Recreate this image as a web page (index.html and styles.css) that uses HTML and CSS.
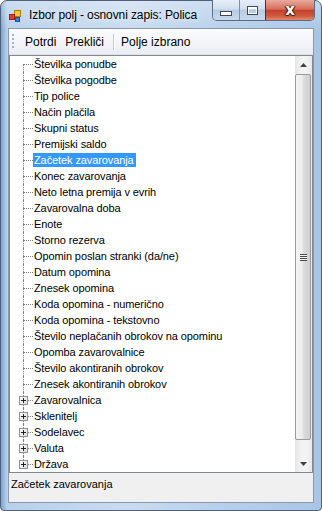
FILE: index.html
```html
<!DOCTYPE html>
<html>
<head>
<meta charset="utf-8">
<link rel="stylesheet" href="styles.css">
</head>
<body>
<div class="window">
  <div class="titlebar">
    <svg class="appicon" width="12" height="12" viewBox="0 0 12 12">
      <rect x="5.5" y="0.5" width="6" height="6" fill="#f6c63a" stroke="#b07a10"/>
      <rect x="0.5" y="4.5" width="5" height="5" fill="#e0412d" stroke="#9a2214"/>
      <rect x="6.5" y="7.5" width="4" height="4" fill="#3c7fd6" stroke="#1f4f96"/>
    </svg>
    <span class="title">Izbor polj - osnovni zapis: Polica</span>
    <div class="capbtns">
      <div class="capbtn min"><span class="min-glyph"></span></div>
      <div class="capbtn max"><span class="max-glyph"></span></div>
      <div class="capbtn close"><span class="close-glyph">x</span></div>
    </div>
  </div>
  <div class="client">
    <div class="toolbar">
      <span class="grip"></span>
      <span class="tbtn">Potrdi</span>
      <span class="tbtn">Prekliči</span>
      <span class="tsep"></span>
      <span class="tbtn">Polje izbrano</span>
    </div>
    <div class="tree">
      <div class="rows">
        <div class="row first"><span class="branch"></span><span class="label">Številka ponudbe</span></div>
        <div class="row"><span class="branch"></span><span class="label">Številka pogodbe</span></div>
        <div class="row"><span class="branch"></span><span class="label">Tip police</span></div>
        <div class="row"><span class="branch"></span><span class="label">Način plačila</span></div>
        <div class="row"><span class="branch"></span><span class="label">Skupni status</span></div>
        <div class="row"><span class="branch"></span><span class="label">Premijski saldo</span></div>
        <div class="row"><span class="branch"></span><span class="label selected">Začetek zavarovanja</span></div>
        <div class="row"><span class="branch"></span><span class="label">Konec zavarovanja</span></div>
        <div class="row"><span class="branch"></span><span class="label">Neto letna premija v evrih</span></div>
        <div class="row"><span class="branch"></span><span class="label">Zavarovalna doba</span></div>
        <div class="row"><span class="branch"></span><span class="label">Enote</span></div>
        <div class="row"><span class="branch"></span><span class="label">Storno rezerva</span></div>
        <div class="row"><span class="branch"></span><span class="label">Opomin poslan stranki (da/ne)</span></div>
        <div class="row"><span class="branch"></span><span class="label">Datum opomina</span></div>
        <div class="row"><span class="branch"></span><span class="label">Znesek opomina</span></div>
        <div class="row"><span class="branch"></span><span class="label">Koda opomina - numerično</span></div>
        <div class="row"><span class="branch"></span><span class="label">Koda opomina - tekstovno</span></div>
        <div class="row"><span class="branch"></span><span class="label">Število neplačanih obrokov na opominu</span></div>
        <div class="row"><span class="branch"></span><span class="label">Opomba zavarovalnice</span></div>
        <div class="row"><span class="branch"></span><span class="label">Število akontiranih obrokov</span></div>
        <div class="row"><span class="branch"></span><span class="label">Znesek akontiranih obrokov</span></div>
        <div class="row"><span class="branch plus"><span class="pbox"></span></span><span class="label">Zavarovalnica</span></div>
        <div class="row"><span class="branch plus"><span class="pbox"></span></span><span class="label">Sklenitelj</span></div>
        <div class="row"><span class="branch plus"><span class="pbox"></span></span><span class="label">Sodelavec</span></div>
        <div class="row"><span class="branch plus"><span class="pbox"></span></span><span class="label">Valuta</span></div>
        <div class="row last"><span class="branch plus"><span class="pbox"></span></span><span class="label">Država</span></div>
      </div>
      <div class="vscroll">
        <div class="sbtn">
          <svg width="7" height="4" viewBox="0 0 7 4"><path d="M0 4 L3.5 0 L7 4 Z" fill="#404040"/></svg>
        </div>
        <div class="track">
          <div class="thumb"><span class="thumb-grip"></span></div>
        </div>
        <div class="sbtn">
          <svg width="7" height="4" viewBox="0 0 7 4"><path d="M0 0 L7 0 L3.5 4 Z" fill="#404040"/></svg>
        </div>
      </div>
    </div>
    <div class="status">Začetek zavarovanja</div>
  </div>
</div>
</body>
</html>
```

FILE: styles.css
```css
html, body {
  margin: 0;
  padding: 0;
  background: #ffffff;
}
.window {
  width: 322px;
  height: 511px;
  box-sizing: border-box;
  display: flex;
  flex-direction: column;
  padding: 0 7px 7px 7px;
  border: 1px solid #4e6178;
  border-radius: 7px 7px 4px 4px;
  background:
    linear-gradient(to bottom, rgba(255,255,255,0.3), rgba(255,255,255,0) 30px),
    linear-gradient(to right, #7fa3cf 0px, #b9d0ea 6px, #c9dbf0 40%, #b7cfeb 70%, #a9c5e6 100%);
  font-family: "Liberation Sans", Arial, sans-serif;
}
.titlebar {
  height: 27px;
  display: flex;
  align-items: flex-start;
  flex-shrink: 0;
}
.appicon {
  margin: 9px 0 0 1px;
  flex-shrink: 0;
}
.title {
  margin: 6px 0 0 8px;
  font-size: 12px;
  letter-spacing: -0.1px;
  line-height: 16px;
  color: #000;
  white-space: nowrap;
  flex: 1;
  text-shadow: 0 0 6px rgba(255,255,255,0.9);
}
.capbtns {
  display: flex;
  margin-top: -1px;
  margin-right: -1px;
  height: 20px;
  border: 1px solid #5b6c80;
  border-top: none;
  border-radius: 0 0 5px 5px;
  overflow: hidden;
}
.capbtn {
  height: 20px;
  display: flex;
  align-items: center;
  justify-content: center;
  box-sizing: border-box;
}
.capbtn.min {
  width: 27px;
  border-right: 1px solid #7d8fa4;
  background: linear-gradient(to bottom, #e6eef8 0%, #d2def0 45%, #b8cbe3 50%, #c8d9ee 100%);
}
.capbtn.max {
  width: 26px;
  border-right: 1px solid #5b2a24;
  background: linear-gradient(to bottom, #e6eef8 0%, #d2def0 45%, #b8cbe3 50%, #c8d9ee 100%);
}
.capbtn.close {
  width: 48px;
  background: linear-gradient(to bottom, #e9a99c 0%, #d7705d 45%, #c3412c 52%, #cf5a40 80%, #e08a6c 100%);
}
.min-glyph {
  display: block;
  width: 10px;
  height: 3px;
  margin-top: 6px;
  background: #fff;
  border: 1px solid #3c4a5c;
}
.max-glyph {
  display: block;
  width: 7px;
  height: 4px;
  background: transparent;
  border: 1px solid #fff;
  border-top-width: 2px;
  outline: 1px solid #3c4a5c;
}
.close-glyph {
  font-family: "DejaVu Sans", sans-serif;
  font-weight: bold;
  font-size: 15px;
  line-height: 14px;
  color: #fff;
  text-shadow: 0 0 1px #3a1410, 1px 0 1px #3a1410, -1px 0 1px #3a1410, 0 1px 1px #3a1410;
}
.client {
  flex: 1;
  display: flex;
  flex-direction: column;
  border: 1px solid #8699ae;
  background: #f0f0f0;
  min-height: 0;
}
.toolbar {
  height: 26px;
  flex-shrink: 0;
  display: flex;
  align-items: center;
  box-sizing: border-box;
  padding-left: 3px;
  background: linear-gradient(to bottom, #fbfcfe 0%, #f3f5f9 50%, #e9edf3 100%);
  border-bottom: 1px solid #dfe3e8;
  font-size: 12px;
  color: #000;
}
.grip {
  width: 2px;
  height: 16px;
  background: repeating-linear-gradient(to bottom, #a9b3bf 0px, #a9b3bf 2px, transparent 2px, transparent 4px);
  margin-right: 6px;
}
.tbtn {
  padding: 0 4px 0 5px;
  line-height: 16px;
  margin-top: 1px;
}
.tsep {
  width: 1px;
  height: 16px;
  background: #c5c9cf;
  border-right: 1px solid #ffffff;
  margin: 0 1px 0 5px;
}
.tree {
  height: 418px;
  flex-shrink: 0;
  box-sizing: border-box;
  border: 1px solid #828790;
  background: #ffffff;
  display: flex;
}
.rows {
  flex: 1;
  display: flex;
  flex-direction: column;
}
.row {
  height: 16px;
  display: flex;
  align-items: stretch;
  font-size: 11px;
  color: #000;
}
.branch {
  width: 23px;
  flex-shrink: 0;
  position: relative;
}
.branch::before {
  content: "";
  position: absolute;
  left: 13px;
  top: 0;
  bottom: 0;
  border-left: 1px dotted #808080;
}
.branch::after {
  content: "";
  position: absolute;
  left: 13px;
  top: 8px;
  width: 10px;
  border-top: 1px dotted #808080;
}
.row.first .branch::before {
  top: 8px;
}
.row.last .branch::before {
  bottom: 8px;
}
.pbox {
  position: absolute;
  left: 9px;
  top: 4px;
  width: 7px;
  height: 7px;
  border: 1px solid #919191;
  background: linear-gradient(to bottom right, #ffffff, #dcdcdc);
  z-index: 1;
}
.pbox::before {
  content: "";
  position: absolute;
  left: 1px;
  top: 3px;
  width: 5px;
  height: 1px;
  background: #1f1f1f;
}
.pbox::after {
  content: "";
  position: absolute;
  left: 3px;
  top: 1px;
  width: 1px;
  height: 5px;
  background: #1f1f1f;
}
.label {
  line-height: 16px;
  padding: 0 2px 0 1px;
  white-space: nowrap;
  letter-spacing: -0.1px;
}
.label.selected {
  background: #3399ff;
  color: #ffffff;
  margin-top: 1px;
  line-height: 14px;
  height: 14px;
}
.vscroll {
  width: 17px;
  flex-shrink: 0;
  display: flex;
  flex-direction: column;
  background: linear-gradient(to right, #e6e6e6, #f3f3f3 40%, #f3f3f3 70%, #e8e8e8);
}
.sbtn {
  height: 17px;
  flex-shrink: 0;
  display: flex;
  align-items: center;
  justify-content: center;
}
.track {
  flex: 1;
  display: flex;
  flex-direction: column;
}
.thumb {
  margin: 1px 1px 0 0;
  height: 366px;
  box-sizing: border-box;
  border: 1px solid #9a9a9a;
  border-radius: 2px;
  background: linear-gradient(to right, #f4f4f4 0%, #ececec 45%, #dcdcdc 55%, #d0d0d0 100%);
  display: flex;
  align-items: center;
  justify-content: center;
}
.thumb-grip {
  width: 7px;
  height: 7px;
  background: repeating-linear-gradient(to bottom, #4a4a4a 0px, #4a4a4a 1px, #f4f4f4 1px, #f4f4f4 2px);
}
.status {
  flex: 1;
  font-size: 11px;
  line-height: 16px;
  padding: 3px 0 0 2px;
  color: #000;
  background: #f0f0f0;
}
```
